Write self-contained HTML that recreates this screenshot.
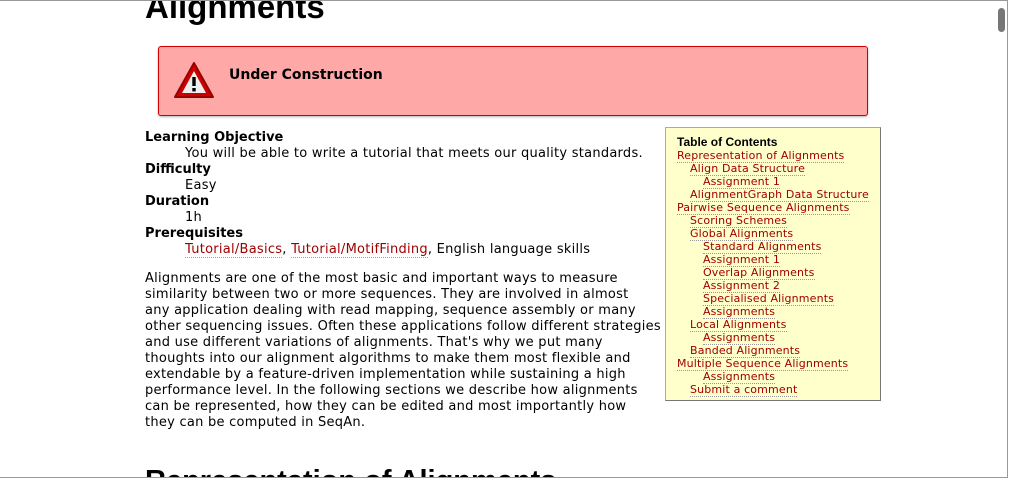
<!DOCTYPE html>
<html><head><style>
html,body{margin:0;padding:0;overflow:hidden;}
body{width:1009px;height:478px;overflow:hidden;position:relative;background:#fff;font-family:"DejaVu Sans","Liberation Sans",sans-serif;font-size:13px;color:#000;}
.clip{position:absolute;left:0;top:0;width:1009px;height:477px;overflow:hidden;}
.frame{position:absolute;left:0;top:0;width:1007px;height:476px;border:1px solid #999;border-left:none;}
.sb{position:absolute;left:998px;top:8px;width:7px;height:24px;background:#777;border-radius:4px;}
h1{position:absolute;left:145px;top:-12px;margin:0;font:bold 33px "Liberation Sans",Arial,sans-serif;}
.alert{position:absolute;left:158px;top:46px;width:708px;height:68px;background:#ffa8a8;border:1px solid #d40000;border-radius:3px;box-shadow:0 1px 2px rgba(0,0,0,.3);}
.alert b{position:absolute;left:70px;top:20px;font:bold 14px "DejaVu Sans",sans-serif;}
.alert svg{position:absolute;left:13px;top:13px;}
.dl{position:absolute;left:145px;top:130px;line-height:16px;letter-spacing:0.26px;white-space:nowrap;}
.dl .t{font-weight:bold;letter-spacing:0;}
.dl .d{padding-left:40px;}
a{color:#a00000;text-decoration:none;border-bottom:1px dotted #999;}
.p{position:absolute;left:145px;top:271px;line-height:16px;letter-spacing:0.26px;white-space:nowrap;}
.toc{position:absolute;left:665px;top:127px;width:214px;height:272px;background:#ffffcc;border:1px solid #aaa;border-right-color:#777;border-bottom-color:#777;font-size:11px;line-height:13px;letter-spacing:0.15px;}
.toc .h{font:bold 12px "Liberation Sans",Arial,sans-serif;margin:7px 0 0 11px;letter-spacing:0;}
.toc div{margin-left:11px;white-space:nowrap;}
.toc .l2{margin-left:24px}.toc .l3{margin-left:37px}
h2{position:absolute;left:145px;top:465px;margin:0;font:bold 29px "Liberation Sans",Arial,sans-serif;white-space:nowrap;}
</style></head><body>
<div class="clip">
<h1>Alignments</h1>
<div class="alert"><svg width="44" height="42" viewBox="0 0 44 42"><path d="M22 3 L41 37 L3 37 Z" fill="#c00" stroke="#900" stroke-width="2" stroke-linejoin="round"/><path d="M22 11 L34 33 L10 33 Z" fill="#eee"/><rect x="20.3" y="17" width="3.4" height="9" fill="#000"/><rect x="20.3" y="28" width="3.4" height="3.4" fill="#000"/></svg><b>Under Construction</b></div>
<div class="dl">
<div class="t">Learning Objective</div><div class="d">You will be able to write a tutorial that meets our quality standards.</div>
<div class="t">Difficulty</div><div class="d">Easy</div>
<div class="t">Duration</div><div class="d">1h</div>
<div class="t">Prerequisites</div><div class="d"><a>Tutorial/Basics</a>, <a>Tutorial/MotifFinding</a>, English language skills</div>
</div>
<div class="p">Alignments are one of the most basic and important ways to measure<br>similarity between two or more sequences. They are involved in almost<br>any application dealing with read mapping, sequence assembly or many<br>other sequencing issues. Often these applications follow different strategies<br>and use different variations of alignments. That's why we put many<br>thoughts into our alignment algorithms to make them most flexible and<br>extendable by a feature-driven implementation while sustaining a high<br>performance level. In the following sections we describe how alignments<br>can be represented, how they can be edited and most importantly how<br>they can be computed in SeqAn.</div>
<div class="toc">
<div class="h">Table of Contents</div>
<div><a>Representation of Alignments</a></div>
<div class="l2"><a>Align Data Structure</a></div>
<div class="l3"><a>Assignment 1</a></div>
<div class="l2"><a>AlignmentGraph Data Structure</a></div>
<div><a>Pairwise Sequence Alignments</a></div>
<div class="l2"><a>Scoring Schemes</a></div>
<div class="l2"><a>Global Alignments</a></div>
<div class="l3"><a>Standard Alignments</a></div>
<div class="l3"><a>Assignment 1</a></div>
<div class="l3"><a>Overlap Alignments</a></div>
<div class="l3"><a>Assignment 2</a></div>
<div class="l3"><a>Specialised Alignments</a></div>
<div class="l3"><a>Assignments</a></div>
<div class="l2"><a>Local Alignments</a></div>
<div class="l3"><a>Assignments</a></div>
<div class="l2"><a>Banded Alignments</a></div>
<div><a>Multiple Sequence Alignments</a></div>
<div class="l3"><a>Assignments</a></div>
<div class="l2"><a>Submit a comment</a></div>
</div>
<h2>Representation of Alignments</h2>
</div>
<div class="frame"></div>
<div class="sb"></div>
</body></html>
